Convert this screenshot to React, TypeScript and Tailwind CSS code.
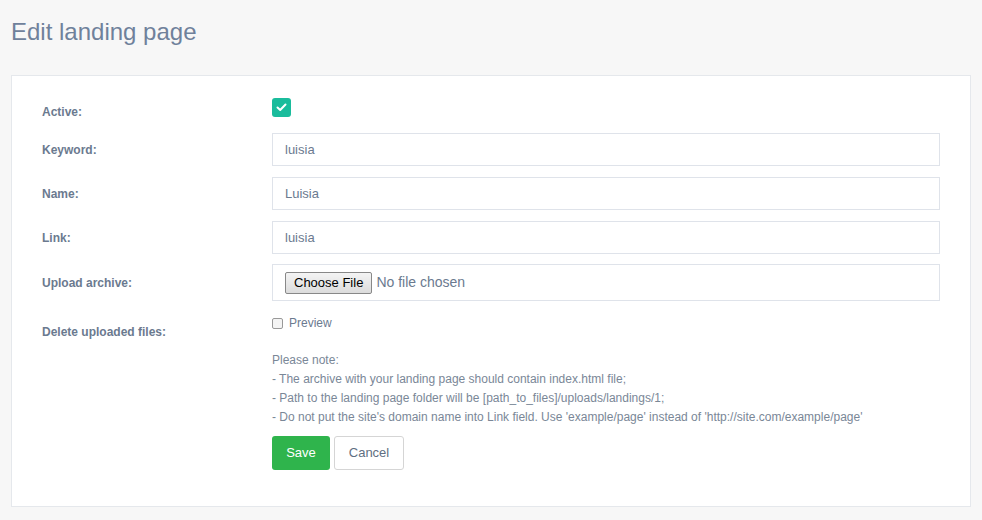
export default function App() {
  const f = { fontFamily: '"Liberation Sans", Arial, sans-serif' };
  const label = "w-[230px] shrink-0 text-[12px] font-bold text-[#6b7a8f]";
  const input = "flex-1 h-[33px] border border-[#dfe3ea] bg-white px-[12px] flex items-center text-[13px] text-[#6b7a8f]";
  return (
    <div className="w-[982px] h-[520px] bg-[#f7f7f7] overflow-hidden" style={f}>
      <h1 className="pl-[11px] pt-[18px] h-[75px] text-[24px] text-[#6f819b] leading-[28px]">Edit landing page</h1>
      <div className="mx-[11px] h-[432px] bg-white border border-[#e5e8ec] pl-[30px] pr-[30px] pt-[21px]">
        <div className="flex items-center h-[20px]">
          <div className={label + " pt-[10px]"}>Active:</div>
          <div className="w-[19px] h-[19px] rounded-[3px] bg-[#1abc9c] flex items-center justify-center">
            <svg width="11" height="9" viewBox="0 0 11 9"><path d="M1.5 4.5L4.2 7L9.5 1.5" stroke="white" strokeWidth="2" fill="none" strokeLinecap="round" strokeLinejoin="round"/></svg>
          </div>
        </div>
        <div className="flex items-center mt-[16px]">
          <div className={label}>Keyword:</div>
          <div className={input}>luisia</div>
        </div>
        <div className="flex items-center mt-[11px]">
          <div className={label}>Name:</div>
          <div className={input}>Luisia</div>
        </div>
        <div className="flex items-center mt-[11px]">
          <div className={label}>Link:</div>
          <div className={input}>luisia</div>
        </div>
        <div className="flex items-center mt-[10px]">
          <div className={label}>Upload archive:</div>
          <div className="flex-1 h-[37px] border border-[#dfe3ea] px-[12px] flex items-center text-[13px] text-[#6b7a8f]">
            <span className="h-[22px] px-[8px] border border-[#888] rounded-[2px] bg-gradient-to-b from-[#f4f4f4] to-[#dcdcdc] text-[13px] text-black flex items-center" style={{ fontFamily: '"Liberation Sans", Arial, sans-serif' }}>Choose File</span>
            <span className="ml-[4px] text-[14px]">No file chosen</span>
          </div>
        </div>
        <div className="flex items-start mt-[15px]">
          <div className={label + " pt-[7px]"}>Delete uploaded files:</div>
          <div className="flex-1">
            <div className="flex items-center gap-[6px] text-[12px] text-[#6b7a8f] h-[14px]">
              <span className="w-[11px] h-[11px] rounded-[2px] border border-[#999] bg-[#f4f4f4]" />Preview
            </div>
            <div className="mt-[21px] text-[12px] leading-[19px] text-[#7a8797]">
              <div>Please note:</div>
              <div>- The archive with your landing page should contain index.html file;</div>
              <div>- Path to the landing page folder will be [path_to_files]/uploads/landings/1;</div>
              <div>- Do not put the site's domain name into Link field. Use 'example/page' instead of 'http://site.com/example/page'</div>
            </div>
            <div className="flex gap-[4px] mt-[9px]">
              <button className="h-[34px] w-[58px] rounded-[3px] bg-[#2fb44c] text-white text-[13px]">Save</button>
              <button className="h-[34px] w-[70px] rounded-[3px] border border-[#d5d5d5] bg-white text-[#5f6f82] text-[13px]">Cancel</button>
            </div>
          </div>
        </div>
      </div>
    </div>
  );
}
